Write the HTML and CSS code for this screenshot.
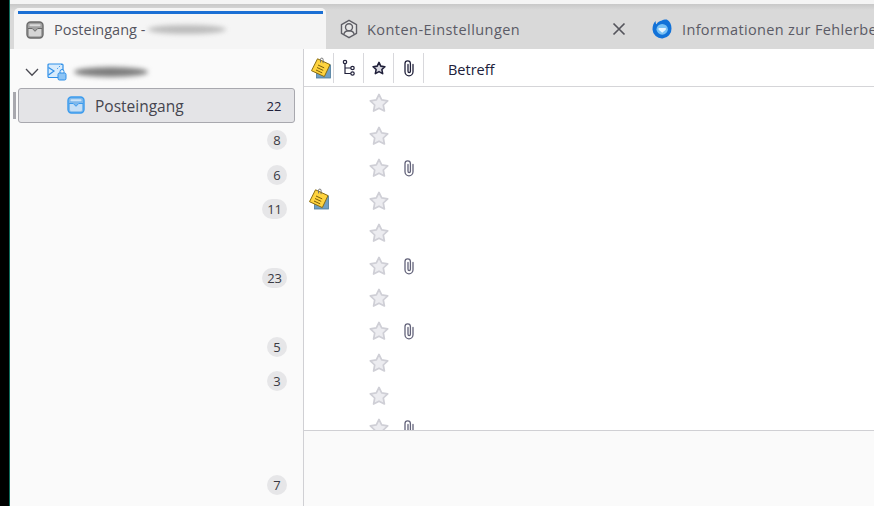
FILE: index.html
```html
<!DOCTYPE html>
<html lang="de">
<head>
<meta charset="utf-8">
<title>Posteingang</title>
<link rel="stylesheet" href="styles.css">
</head>
<body>
<svg class="defs" width="0" height="0" aria-hidden="true">
  <defs>
    <symbol id="star" viewBox="0 0 20 20">
      <path d="M10 1.500l2.700 5.400 6 .9-4.400 4.200 1.100 6L10 15.200 4.600 18l1.100-6-4.400-4.200 6-.9z" fill="#ececf0" stroke="#cfcfd6" stroke-width="1.700" stroke-linejoin="round"/>
    </symbol>
    <symbol id="clip" viewBox="0 0 14 18">
      <path d="M11 5.500v7.300a4 4 0 0 1-8 0V4.500a2.700 2.700 0 0 1 5.400 0v7.800a1.200 1.200 0 0 1-2.400 0V5.500" fill="none" stroke="#63637a" stroke-width="1.300" stroke-linecap="round"/>
    </symbol>
    <symbol id="note" viewBox="0 0 22 22">
      <rect x="6.500" y="8" width="14" height="13" fill="#6f9fc4" stroke="#4c7a9c" stroke-width=".8"/>
      <path d="M7.500 1.800L20 7.600 14.300 19.600 1.500 13.700z" fill="#ffd43f" stroke="#8a6d10" stroke-width="1" stroke-linejoin="round"/>
      <path d="M8 8l6.200 2.900M7 10.500l6.200 2.900M6 13l6.200 2.900" stroke="#7a5e08" stroke-width="1"/>
      <path d="M10.500 5.500V2.400a1.300 1.300 0 0 1 2.600 0v3.800" fill="none" stroke="#6d6d6d" stroke-width=".9"/>
    </symbol>
    <symbol id="inbox" viewBox="0 0 18 18">
      <rect x="1" y="1" width="16" height="16" rx="3.500" fill="currentColor" fill-opacity=".6" stroke="currentColor" stroke-width="1.400"/>
      <rect x="3.500" y="3.300" width="11" height="2" rx=".8" fill="#fff" fill-opacity=".6"/>
      <path d="M3 7.500h3.500L9 10.300l2.500-2.800H15v6.300a1.500 1.500 0 0 1-1.500 1.500h-9A1.500 1.500 0 0 1 3 13.800z" fill="#fff" fill-opacity=".55"/>
      <path d="M2 7.500h4.300L9 10.300l2.700-2.800H16" fill="none" stroke="currentColor" stroke-width="1"/>
    </symbol>
  </defs>
</svg>
<div class="strip"></div>
<div class="app">
  <div class="topline"></div>
  <div class="tabbar">
    <div class="tab tab-active">
      <svg class="tab-icon tone-gray" width="18" height="18"><use href="#inbox"/></svg>
      <span class="tab-label">Posteingang -</span>
      <span class="smudge smudge-tab"></span>
    </div>
    <div class="tab tab-account">
      <svg class="tab-icon" width="20" height="20" viewBox="0 0 20 20">
        <path d="M10 1.300l7.500 4.300v8.800L10 18.700l-7.500-4.300V5.600z" fill="#e6e6e6" stroke="#5f5f66" stroke-width="1.400" stroke-linejoin="round"/>
        <circle cx="10" cy="8.300" r="3.500" fill="none" stroke="#5f5f66" stroke-width="1.400"/>
        <path d="M4.800 15.500c.5-2.800 2.400-3.700 5.200-3.700s4.700.9 5.200 3.700" fill="none" stroke="#5f5f66" stroke-width="1.400"/>
      </svg>
      <span class="tab-label">Konten-Einstellungen</span>
      <svg class="tab-close" width="14" height="14" viewBox="0 0 14 14">
        <path d="M1.500 1.500l11 11M12.500 1.500l-11 11" stroke="#55555c" stroke-width="1.700"/>
      </svg>
    </div>
    <div class="tab tab-info">
      <svg class="tab-icon" width="20" height="20" viewBox="0 0 20 20">
        <path d="M10 1.500c.8-.5 2.500-1 4.800-.9 3 1.500 4.700 5 4.700 8.900a9.500 9.500 0 0 1-19 1C.5 7 1.500 3.800 3.800 2c-.3 1.600 0 2.600.7 3.200C5.600 3.200 7.700 2 10 1.500z" fill="#1272d8"/>
        <ellipse cx="10.200" cy="10.300" rx="5.700" ry="5.400" fill="#79c1f4"/>
        <path d="M6.600 9h7.200v1.800L10.200 13.800 6.600 10.800z" fill="#e9f6ff"/>
      </svg>
      <span class="tab-label">Informationen zur Fehlerbehebung</span>
    </div>
  </div>
  <div class="content">
    <nav class="sidebar">
      <div class="account-row">
        <svg class="chevron" width="14" height="14" viewBox="0 0 14 14">
          <path d="M1 4l6 6.300L13 4" fill="none" stroke="#4a4a52" stroke-width="1.300"/>
        </svg>
        <svg class="account-icon" width="20" height="18" viewBox="0 0 20 18">
          <path d="M11 14.500H2a1 1 0 0 1-1-1V2a1 1 0 0 1 1-1h13a1 1 0 0 1 1 1v5" fill="#d7ebfc" stroke="#2f8fe8" stroke-width="1.200"/>
          <path d="M1.500 4.500l5.500 3.500-5.500 4" fill="none" stroke="#2f8fe8" stroke-width="1.200"/>
          <path d="M15 1l-5 5" stroke="#2f8fe8" stroke-dasharray="1.500 1.500"/>
          <rect x="11" y="10" width="8" height="7" rx="1.500" fill="#8cc4f5" stroke="#2f8fe8"/>
          <path d="M13 10V8.500a2 2 0 0 1 4 0V10" fill="none" stroke="#2f8fe8"/>
        </svg>
        <span class="smudge smudge-account"></span>
      </div>
      <div class="folder-row folder-selected">
        <svg class="folder-icon tone-blue" width="18" height="18"><use href="#inbox"/></svg>
        <span class="folder-name">Posteingang</span>
        <span class="count count-plain">22</span>
      </div>
      <div class="folder-row"><span class="count">8</span></div>
      <div class="folder-row"><span class="count">6</span></div>
      <div class="folder-row"><span class="count">11</span></div>
      <div class="folder-row"></div>
      <div class="folder-row"><span class="count">23</span></div>
      <div class="folder-row"></div>
      <div class="folder-row"><span class="count">5</span></div>
      <div class="folder-row"><span class="count">3</span></div>
      <div class="folder-row"></div>
      <div class="folder-row"></div>
      <div class="folder-row"><span class="count">7</span></div>
    </nav>
    <main class="main">
      <div class="col-header">
        <div class="col col-note"><svg width="22" height="22"><use href="#note"/></svg></div>
        <div class="col col-thread">
          <svg width="16" height="18" viewBox="0 0 16 18">
            <path d="M4 4v10.500h6.500M4 9h6.500" fill="none" stroke="#20203a" stroke-width="1.200"/>
            <circle cx="4" cy="3" r="1.700" fill="#fff" stroke="#20203a" stroke-width="1.200"/>
            <circle cx="11.500" cy="9" r="1.700" fill="#fff" stroke="#20203a" stroke-width="1.200"/>
            <circle cx="11.500" cy="14.500" r="1.700" fill="#fff" stroke="#20203a" stroke-width="1.200"/>
          </svg>
        </div>
        <div class="col col-star">
          <svg width="14" height="14" viewBox="0 0 18 18">
            <path d="M9 1.800l2.300 4.800 5.300.7-3.900 3.700 1 5.300L9 13.700l-4.700 2.600 1-5.300-3.900-3.700 5.300-.7z" fill="#d8d8e0" stroke="#20203a" stroke-width="2" stroke-linejoin="round"/>
          </svg>
        </div>
        <div class="col col-clip">
          <svg width="14" height="18" viewBox="0 0 14 18">
            <path d="M11 5.500v7.300a4 4 0 0 1-8 0V4.500a2.700 2.700 0 0 1 5.400 0v7.800a1.200 1.200 0 0 1-2.400 0V5.500" fill="none" stroke="#20203a" stroke-width="1.300" stroke-linecap="round"/>
          </svg>
        </div>
        <div class="col col-subject">Betreff</div>
      </div>
      <div class="rows">
        <div class="row"><span class="cell-note"></span><svg class="cell-star" width="20" height="20"><use href="#star"/></svg></div>
        <div class="row"><span class="cell-note"></span><svg class="cell-star" width="20" height="20"><use href="#star"/></svg></div>
        <div class="row"><span class="cell-note"></span><svg class="cell-star" width="20" height="20"><use href="#star"/></svg><svg class="cell-clip" width="14" height="18"><use href="#clip"/></svg></div>
        <div class="row"><span class="cell-note"><svg class="note-icon" width="22" height="22"><use href="#note"/></svg></span><svg class="cell-star" width="20" height="20"><use href="#star"/></svg></div>
        <div class="row"><span class="cell-note"></span><svg class="cell-star" width="20" height="20"><use href="#star"/></svg></div>
        <div class="row"><span class="cell-note"></span><svg class="cell-star" width="20" height="20"><use href="#star"/></svg><svg class="cell-clip" width="14" height="18"><use href="#clip"/></svg></div>
        <div class="row"><span class="cell-note"></span><svg class="cell-star" width="20" height="20"><use href="#star"/></svg></div>
        <div class="row"><span class="cell-note"></span><svg class="cell-star" width="20" height="20"><use href="#star"/></svg><svg class="cell-clip" width="14" height="18"><use href="#clip"/></svg></div>
        <div class="row"><span class="cell-note"></span><svg class="cell-star" width="20" height="20"><use href="#star"/></svg></div>
        <div class="row"><span class="cell-note"></span><svg class="cell-star" width="20" height="20"><use href="#star"/></svg></div>
        <div class="row"><span class="cell-note"></span><svg class="cell-star" width="20" height="20"><use href="#star"/></svg><svg class="cell-clip" width="14" height="18"><use href="#clip"/></svg></div>
      </div>
      <div class="preview"></div>
    </main>
  </div>
</div>
</body>
</html>
```
FILE: styles.css
```css
* { box-sizing: border-box; }
html, body { height: 100%; margin: 0; }
body {
  display: flex;
  width: 874px;
  height: 506px;
  overflow: hidden;
  font-family: "Segoe UI", "Open Sans", "Noto Sans", sans-serif;
  color: #20203a;
  background: #fff;
}
.defs { position: absolute; }
.strip { flex: 0 0 10px; background: #000; border-right: 1px solid #0e6b5c; }
.app { flex: 1; min-width: 0; display: flex; flex-direction: column; }
.topline { flex: 0 0 4px; background: #f4f4f4; }
.tabbar {
  flex: 0 0 45px;
  display: flex;
  align-items: flex-end;
  padding-left: 4px;
  background: linear-gradient(#c8c8c8, #d9d9d9 6px);
  overflow: hidden;
}
.tab {
  position: relative;
  display: flex;
  align-items: center;
  flex: none;
  height: 41px;
  font-size: 14.500px;
  white-space: nowrap;
  color: #5b5b66;
}
.tab-active {
  width: 312px;
  padding: 2px 0 0 12px;
  background: #f5f5f5;
  border-radius: 5px 5px 0 0;
  color: #55555f;
}
.tab-active::before {
  content: "";
  position: absolute;
  left: 4px;
  right: 3px;
  top: 3px;
  height: 3px;
  background: #1a6fd4;
}
.tab-account { width: 326px; padding: 1px 0 0 13px; letter-spacing: .45px; }
.tab-info { padding-top: 1px; letter-spacing: .35px; }
.tab-icon { flex: none; margin-right: 10px; }
.tab-account .tab-icon { margin-right: 8px; }
.tone-gray { color: #6a6a6a; }
.tone-blue { color: #3a9bee; }
.tab-close { margin-left: 92px; flex: none; }
.smudge {
  display: block;
  background: #8e8e8e;
  filter: blur(2.500px);
  border-radius: 50%;
}
.smudge-tab { width: 78px; height: 9px; margin-left: 3px; opacity: .55; }
.smudge-account { width: 74px; height: 10px; margin-left: 7px; background: #7d7d7d; }
.content { flex: 1; min-height: 0; display: flex; }
.sidebar {
  flex: 0 0 294px;
  background: #fafafa;
  border-right: 1px solid #d0d0d4;
  overflow: hidden;
}
.account-row {
  height: 39px;
  display: flex;
  align-items: center;
  padding: 6px 0 0 15px;
}
.account-icon { margin-left: 8px; flex: none; }
.folder-row {
  position: relative;
  height: 34.450px;
  display: flex;
  align-items: center;
  margin: 0 8px;
  padding: 0 8px 0 49px;
  font-size: 15.500px;
  color: #45454f;
}
.folder-selected {
  height: 35px;
  background: #e4e4e7;
  border: 1px solid #a8a8ae;
  border-radius: 3px;
  padding-top: 1px;
  padding-left: 48px;
}
.folder-selected::before {
  content: "";
  position: absolute;
  left: -6px;
  top: 3px;
  bottom: 3px;
  width: 3px;
  background: #a8a8ae;
}
.folder-icon { flex: none; margin-right: 10px; margin-top: -2px; }
.folder-name { flex: 1; }
.count {
  margin-left: auto;
  min-width: 20px;
  height: 20px;
  padding: 0 5px;
  border-radius: 10px;
  background: #e6e6e8;
  color: #3a3a42;
  font-size: 13px;
  line-height: 20px;
  text-align: center;
}
.count-plain { background: none; padding: 0; margin-right: 2px; color: #20203a; }
.main { flex: 1; min-width: 0; display: flex; flex-direction: column; }
.col-header {
  flex: 0 0 38px;
  display: flex;
  align-items: center;
  border-bottom: 1px solid #d5d5d8;
  padding-top: 1px;
}
.col {
  height: 30px;
  display: flex;
  align-items: center;
  justify-content: center;
  border-right: 1px solid #d8d8dc;
}
.col-note { width: 30px; padding-left: 4px; }
.col-thread { width: 30px; }
.col-star { width: 30px; }
.col-clip { width: 30px; }
.col-subject {
  border-right: 0;
  padding: 2px 0 0 24px;
  font-size: 14.500px;
  color: #20203a;
}
.rows { flex: 0 0 343px; overflow: hidden; background: #fff; }
.row { height: 32.500px; display: flex; align-items: center; }
.cell-note { display: flex; align-items: flex-start; width: 65px; padding-left: 4px; flex: none; height: 22px; }
.note-icon { margin-top: -2px; }
.cell-star { flex: none; }
.cell-clip { flex: none; margin-left: 13px; }
.preview { flex: 1; background: #fafafa; border-top: 1px solid #d0d0d4; }
```
